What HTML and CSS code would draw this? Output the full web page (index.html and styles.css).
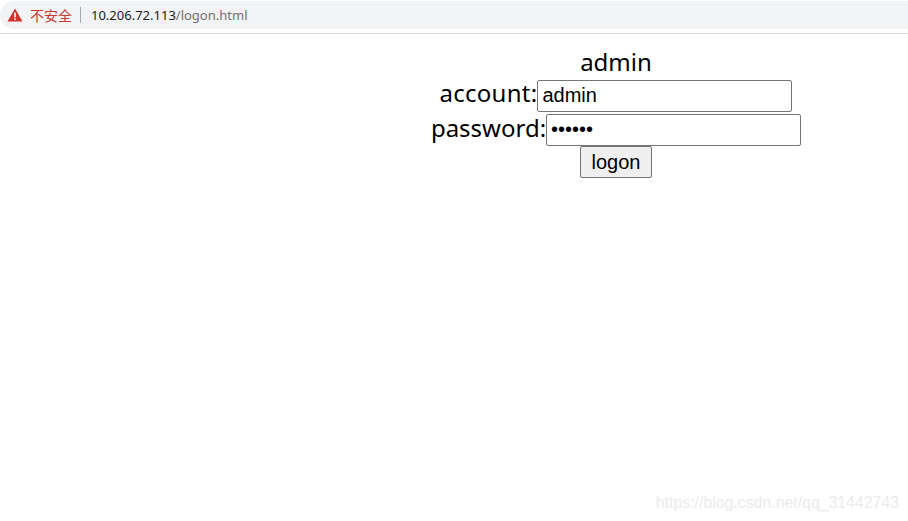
FILE: index.html
```html
<!DOCTYPE html>
<html lang="en">
<head>
    <meta charset="UTF-8">
    <meta name="viewport" content="width=device-width, initial-scale=1.0">
    <title>logon</title>
    <link rel="stylesheet" href="styles.css">
</head>
<body>
    <div class="toolbar">
        <div class="address-bar">
            <svg class="warn-icon" width="16" height="14" viewBox="0 0 16 14">
                <path d="M8 0.5 L15.5 13.5 L0.5 13.5 Z" fill="#d0342c"/>
                <rect x="7.2" y="4.6" width="1.6" height="4.8" fill="#fff"/>
                <rect x="7.2" y="10.3" width="1.6" height="1.6" fill="#fff"/>
            </svg>
            <span class="warn-text">不安全</span>
            <span class="divider"></span>
            <span class="url"><span class="host">10.206.72.113</span>/logon.html</span>
        </div>
    </div>
    <form class="logon-form">
        <div class="title">admin</div>
        <div class="row account-row">
            <label for="account">account:</label><input type="text" id="account" value="admin">
        </div>
        <div class="row password-row">
            <label for="password">password:</label><input type="password" id="password" value="123456">
        </div>
        <button type="button" class="logon-btn">logon</button>
    </form>
    <div class="watermark">https://blog.csdn.net/qq_31442743</div>
</body>
</html>
```

FILE: styles.css
```css
html, body {
    height: 100%;
}

body {
    margin: 0;
    background-color: #fff;
    font-family: "Noto Sans", "Open Sans", sans-serif;
    overflow: hidden;
}

.toolbar {
    height: 34px;
    box-sizing: border-box;
    padding-top: 1px;
    border-bottom: 1px solid #dcdcdc;
    background-color: #fff;
}

.address-bar {
    height: 28px;
    display: flex;
    align-items: center;
    padding-left: 7px;
    background-color: #f1f3f4;
    border-radius: 14px 0 0 14px;
}

.warn-icon {
    flex: none;
}

.warn-text {
    margin-left: 7px;
    font-family: "Noto Sans CJK SC", sans-serif;
    font-size: 14px;
    line-height: 26px;
    margin-bottom: 1px;
    color: #c5392f;
}

.divider {
    width: 1px;
    height: 16px;
    margin: 0 10px 0 8px;
    background-color: #a8a8a8;
}

.url {
    font-family: "Noto Sans", sans-serif;
    font-size: 13px;
    color: #6e7175;
}

.host {
    color: #202124;
}

.logon-form {
    display: flex;
    flex-direction: column;
    align-items: center;
    padding: 9px 0 0 324px;
    font-size: 24px;
    color: #000;
}

.title {
    line-height: 37px;
}

.row {
    display: flex;
    align-items: flex-start;
}

.account-row {
    margin-bottom: 2px;
}

.account-row label {
    letter-spacing: 0.25px;
}

.row label {
    line-height: 26px;
}

.password-row label {
    line-height: 28px;
}

.row input {
    width: 255px;
    height: 32px;
    box-sizing: border-box;
    padding: 0 5px 2px 4px;
    border: 1px solid #767676;
    border-radius: 2px;
    font-family: "Liberation Sans", sans-serif;
    font-size: 20px;
    color: #000;
    background-color: #fff;
}

.logon-btn {
    width: 72px;
    height: 32px;
    padding: 0;
    border: 1px solid #767676;
    border-radius: 2px;
    background-color: #efefef;
    font-family: "Liberation Sans", sans-serif;
    font-size: 20px;
    color: #000;
}

.watermark {
    position: absolute;
    right: 9px;
    bottom: 9px;
    font-family: "Liberation Sans", sans-serif;
    font-size: 15.85px;
    color: #ebebeb;
}
```
